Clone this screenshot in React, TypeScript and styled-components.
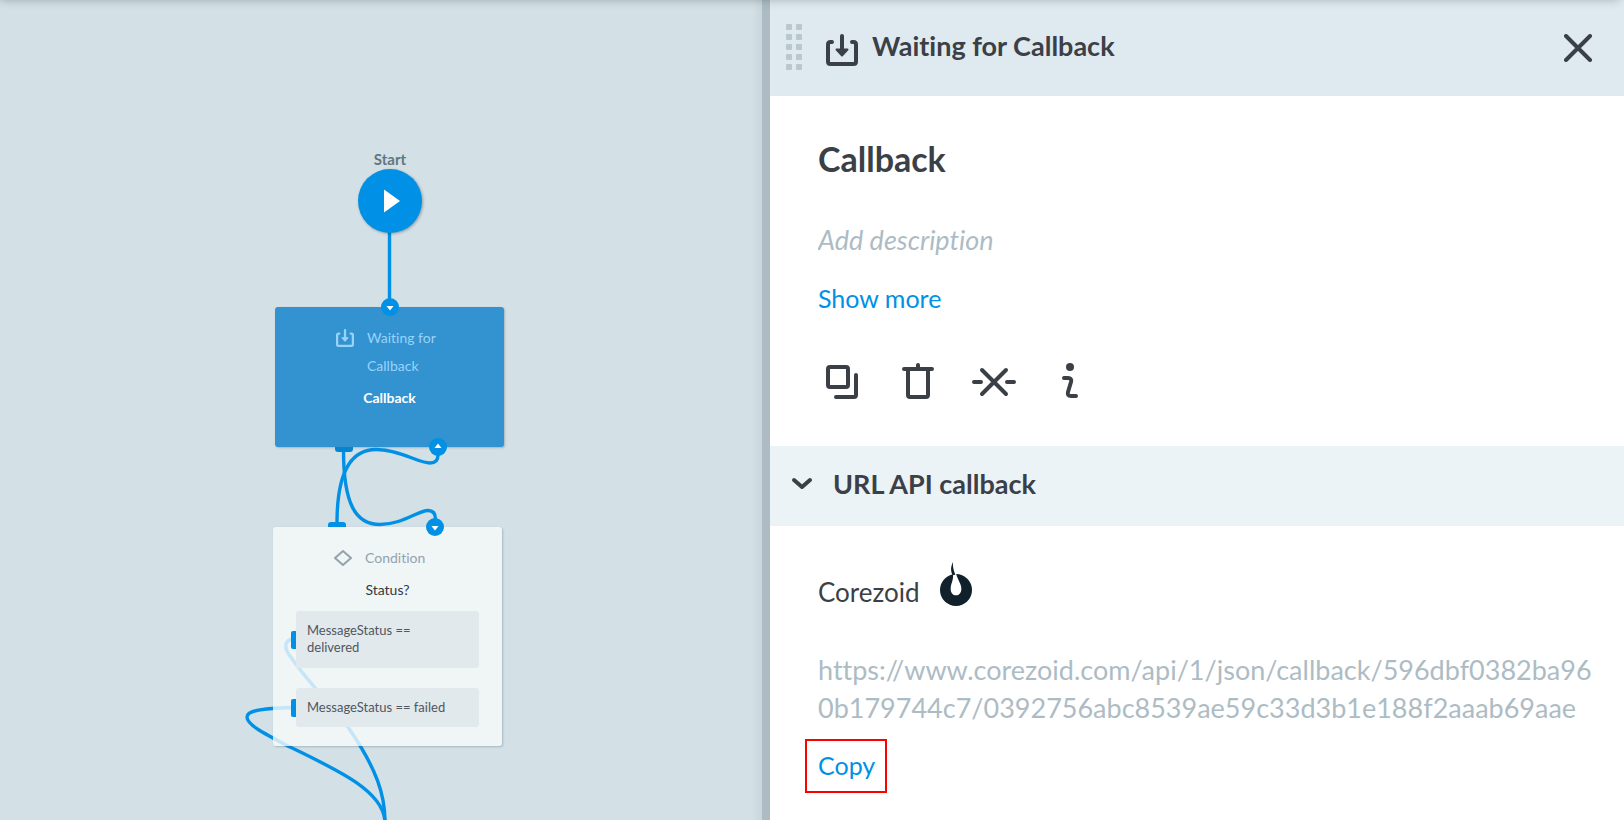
import React from 'react';
import styled, { createGlobalStyle } from 'styled-components';

const color = {
  canvas: '#d3e0e5',
  blue: '#0091e6',
  blueDark: '#0584d2',
  ink: '#3b4047',
  muted: '#adbcc4',
  header: '#dfeaf0',
  section: '#ebf3f7',
};

const GlobalStyle = createGlobalStyle`
  *, *::before, *::after { box-sizing: border-box; }
  body {
    margin: 0;
    font-family: Lato, "Liberation Sans", sans-serif;
    font-variant-ligatures: none;
    color: ${color.ink};
    background: #fff;
  }
  button, input { font: inherit; color: inherit; }
`;

const Page = styled.div`
  position: relative;
  display: grid;
  grid-template-columns: minmax(0, 762fr) 8px minmax(0, 854fr);
  min-height: 100vh;
  overflow: hidden;

  &::before {
    content: '';
    position: absolute;
    z-index: 5;
    top: -10px;
    left: 0;
    right: 4px;
    height: 10px;
    box-shadow: 0 0 10px rgba(0, 0, 0, 0.26);
  }
`;

/* ---------- Process canvas ---------- */

const Canvas = styled.main`
  position: relative;
  overflow: hidden;
  background: linear-gradient(to left, rgba(120, 145, 158, 0.12), rgba(120, 145, 158, 0) 10px) ${color.canvas};
`;

const Splitter = styled.div`
  background: ${color.muted};
  cursor: col-resize;
`;

const Edges = styled.svg`
  position: absolute;
  top: 0;
  left: 0;
  fill: none;
  stroke: ${color.blue};
  stroke-width: 3.4;
`;

const StartNode = styled.div`
  position: absolute;
  left: 350px;
  top: 149px;
  width: 80px;
  display: flex;
  flex-direction: column;
  align-items: center;
  font-size: 15px;
  font-weight: 700;
  line-height: 20px;
  color: #607782;
`;

const StartCircle = styled.button`
  width: 64px;
  height: 64px;
  padding: 0;
  border: 0;
  border-radius: 50%;
  background: ${color.blue};
  box-shadow: 1px 1px 3px rgba(0, 0, 0, 0.3);

  svg { display: block; }
`;

const Node = styled.section<{ $x: number; $y: number; $active?: boolean }>`
  position: absolute;
  left: ${(p) => p.$x}px;
  top: ${(p) => p.$y}px;
  width: 229px;
  min-height: 140px;
  padding: 17px 23px 19px;
  border-radius: 3px;
  font-size: 14px;
  line-height: 28px;
  color: ${(p) => (p.$active ? '#fff' : '#33383d')};
  background: ${(p) => (p.$active ? '#3392d0' : 'rgba(248, 250, 250, 0.8)')};
  box-shadow: 1px 1px 2px rgba(60, 90, 110, 0.3);
`;

const NodeType = styled.div<{ $tint: string }>`
  display: grid;
  grid-template-columns: 18px 96px;
  column-gap: 13px;
  padding-left: 38px;
  color: ${(p) => p.$tint};

  svg { margin-top: 5px; }
`;

const NodeTitle = styled.h3<{ $strong?: boolean }>`
  margin: 4px 0 0;
  font-size: 14px;
  font-weight: ${(p) => (p.$strong ? 700 : 400)};
  line-height: 28px;
  text-align: center;
`;

const Branch = styled.div<{ $gap: number }>`
  position: relative;
  margin-top: ${(p) => p.$gap}px;
  padding: 11px 24px 11px 11px;
  border-radius: 3px;
  background: #e2e9ed;
  font-size: 13px;
  line-height: 17px;
  color: #50575e;

  &::before {
    content: '';
    position: absolute;
    left: -5px;
    top: calc(50% - 9px);
    width: 5px;
    height: 18px;
    border-radius: 2px 0 0 2px;
    background: ${color.blue};
  }
`;

const BranchText = styled.p<{ $tall?: boolean }>`
  margin: 0;
  padding-bottom: ${(p) => (p.$tall ? 1 : 0)}px;
`;

const PortDot = styled.span<{ $x: number; $y: number; $up?: boolean }>`
  position: absolute;
  left: ${(p) => p.$x - 9}px;
  top: ${(p) => p.$y - 9}px;
  width: 18px;
  height: 18px;
  border-radius: 50%;
  background: ${color.blue};

  svg {
    display: block;
    transform: ${(p) => (p.$up ? 'rotate(180deg)' : 'none')};
  }
`;

const PortTab = styled.span<{ $x: number; $y: number; $below?: boolean }>`
  position: absolute;
  left: ${(p) => p.$x}px;
  top: ${(p) => p.$y}px;
  width: 18px;
  height: 5px;
  border-radius: ${(p) => (p.$below ? '0 0 3px 3px' : '3px 3px 0 0')};
  background: ${(p) => (p.$below ? color.blueDark : color.blue)};
`;

/* ---------- Properties panel ---------- */

const Panel = styled.aside`
  background: #fff;
`;

const PanelHeader = styled.header`
  display: flex;
  align-items: center;
  height: 96px;
  padding: 0 26px 0 16px;
  background: ${color.header};
`;

const Grip = styled.span`
  display: grid;
  grid-template-columns: 6px 6px;
  gap: 4px;
  margin-right: 24px;
  padding-bottom: 2px;
  cursor: move;
`;

const GripDot = styled.i`
  height: 6px;
  border-radius: 1px;
  background: #bac7cd;
`;

const PanelTitle = styled.h1`
  flex: 1;
  margin: 0 0 0 14px;
  padding-bottom: 4px;
  font-size: 27px;
  line-height: 32px;
`;

const IconButton = styled.button<{ $size: number }>`
  display: grid;
  place-items: center;
  width: ${(p) => p.$size}px;
  height: ${(p) => p.$size}px;
  padding: 0;
  border: 0;
  background: none;
`;

const Details = styled.div`
  padding: 43px 24px 40px 48px;
`;

const NodeName = styled.h2`
  margin: 0 0 45px;
  font-size: 34px;
  line-height: 40px;
`;

const Description = styled.input`
  display: block;
  width: 100%;
  height: 32px;
  margin-bottom: 26px;
  padding: 0;
  border: 0;
  outline: 0;
  background: none;
  font-size: 27px;
  line-height: 32px;

  &::placeholder {
    color: ${color.muted};
    font-style: italic;
    opacity: 1;
  }
`;

const TextButton = styled.button`
  display: block;
  padding: 0;
  border: 0;
  background: none;
  font-size: 25px;
  line-height: 32px;
  color: ${color.blue};
`;

const Tools = styled.div`
  display: flex;
  gap: 28px;
  margin-top: 44px;
`;

const SectionToggle = styled.button`
  display: flex;
  align-items: center;
  gap: 20px;
  width: 100%;
  height: 80px;
  padding: 0 24px 4px 21px;
  border: 0;
  background: ${color.section};
  font-size: 27px;
  font-weight: 700;
  line-height: 32px;
`;

const SectionBody = styled.div`
  padding: 36px 24px 24px 48px;
`;

const Service = styled.div`
  display: flex;
  align-items: flex-end;
  gap: 20px;
  height: 46px;
  margin-bottom: 43px;
  font-size: 26px;
  line-height: 32px;

  svg { align-self: flex-start; }
`;

const CallbackUrl = styled.p`
  margin: 0;
  font-size: 27px;
  line-height: 38px;
  color: ${color.muted};
  word-break: break-all;
`;

const CopyButton = styled(TextButton)`
  margin: 12px 0 0 -13px;
  padding: 8px 10px 10px 11px;
  border: 2px solid #f00;
`;

/* ---------- Icons ---------- */

const InboxIcon = ({ size }: { size: number }) => (
  <svg width={size} height={size} viewBox="0 0 32 32" fill="none" stroke="currentColor" strokeWidth="4" strokeLinecap="round" strokeLinejoin="round">
    <path d="M6 8H4.500Q2 8 2 10.500V27.500Q2 30 4.500 30H27.500Q30 30 30 27.500V10.500Q30 8 27.500 8H26M16 2V16" />
    <path d="M10.500 15.500H21.500L16 21.500Z" fill="currentColor" strokeWidth="2" />
  </svg>
);

const HeaderInbox = styled.span`
  display: flex;
  padding-top: 4px;
`;

const CloseIcon = () => (
  <svg width="28" height="28" viewBox="0 0 28 28" stroke="currentColor" strokeWidth="4" strokeLinecap="round">
    <path d="M2 2L26 26M26 2L2 26" />
  </svg>
);

const ToolSvg = styled.svg`
  fill: none;
  stroke: currentColor;
  stroke-width: 4;
  stroke-linecap: round;
  stroke-linejoin: round;
`;

const CopyIcon = () => (
  <ToolSvg width="48" height="48" viewBox="0 0 48 48">
    <rect x="10" y="9" width="20" height="20" rx="2" />
    <path d="M38 17V37Q38 39 36 39H18" />
  </ToolSvg>
);

const TrashIcon = () => (
  <ToolSvg width="48" height="48" viewBox="0 0 48 48">
    <path d="M10 11H38M24 7V11M14 11V37Q14 39 16 39H32Q34 39 34 37V11" />
  </ToolSvg>
);

const DisableIcon = () => (
  <ToolSvg width="48" height="48" viewBox="0 0 48 48">
    <path d="M12 12L36 36M36 12L12 36M4 24H11M37 24H44" />
  </ToolSvg>
);

const InfoIcon = () => (
  <ToolSvg width="48" height="48" viewBox="0 0 48 48">
    <circle cx="24" cy="9" r="4" fill="currentColor" stroke="none" />
    <path d="M18 20H22Q26 20 25 24L22 34Q21 38 25 38H30" />
  </ToolSvg>
);

const ChevronIcon = () => (
  <svg width="22" height="22" viewBox="0 0 22 22" fill="none" stroke="currentColor" strokeWidth="4" strokeLinecap="round" strokeLinejoin="round">
    <path d="M3 7L11 14L19 7" />
  </svg>
);

const DiamondIcon = () => (
  <svg width="18" height="18" viewBox="0 0 18 18" fill="none" stroke="currentColor" strokeWidth="2" strokeLinejoin="round">
    <path d="M1 9L9 2L17 9L9 16Z" />
  </svg>
);

const PortArrow = () => (
  <svg width="18" height="18" viewBox="0 0 18 18">
    <path d="M5.500 8H12.500L9 12.500Z" fill="#fff" />
  </svg>
);

const CorezoidLogo = () => (
  <svg width="32" height="44" viewBox="0 0 96 132">
    <circle cx="48" cy="84" r="48" fill="#10212b" />
    <path d="M38 34C43 52 32 64 32 80C32 92 38 100 48 100C58 100 64 92 64 80C64 66 52 52 48 34Z" fill="#fff" />
    <path d="M39 0C32 14 31 26 38 40L46 38C40 24 38 14 39 0Z" fill="#10212b" />
  </svg>
);

const dots = Array.from({ length: 10 }, (_, i) => i);

export default function App() {
  return (
    <Page>
      <GlobalStyle />
      <Canvas>
        <Edges width="762" height="822" viewBox="0 0 762 822">
          <path d="M389.500 230V300" />
          <path d="M343.500 450C343.500 505 356 524.500 380 524.500C402 524.500 418 510.500 428 510.500C433 510.500 435.500 513 435.500 519" />
          <path d="M337 523C337 475 350 449.500 376 449.500C400 449.500 418 463 430 463C436 463 438 460 438 455" />
          <path d="M293 639C284 640 284 648 290 656C312 688 334 706 350 730C377 770 385 795 385 822" />
          <path d="M296 707.500C265 708 247 710 247 717C247 725 265 734 290 747C340 771 384 792 385 822" />
        </Edges>

        <StartNode>
          Start
          <StartCircle aria-label="Start">
            <svg width="64" height="64" viewBox="0 0 64 64">
              <path d="M26 20.500L42 32L26 43.500Z" fill="#fff" />
            </svg>
          </StartCircle>
        </StartNode>

        <Node $x={275} $y={307} $active>
          <NodeType $tint="#99d3fa">
            <InboxIcon size={18} />
            <span>Waiting for Callback</span>
          </NodeType>
          <NodeTitle $strong>Callback</NodeTitle>
        </Node>

        <Node $x={273} $y={527}>
          <NodeType $tint="#93a3ae">
            <DiamondIcon />
            <span>Condition</span>
          </NodeType>
          <NodeTitle>Status?</NodeTitle>
          <Branch $gap={7}>
            <BranchText $tall>MessageStatus == delivered</BranchText>
          </Branch>
          <Branch $gap={20}>
            <BranchText>MessageStatus == failed</BranchText>
          </Branch>
        </Node>

        <PortTab $x={335} $y={447} $below />
        <PortTab $x={328} $y={522} />
        <PortDot $x={390} $y={307}><PortArrow /></PortDot>
        <PortDot $x={438} $y={447} $up><PortArrow /></PortDot>
        <PortDot $x={435} $y={527}><PortArrow /></PortDot>
      </Canvas>

      <Splitter />

      <Panel>
        <PanelHeader>
          <Grip>{dots.map((d) => <GripDot key={d} />)}</Grip>
          <HeaderInbox><InboxIcon size={32} /></HeaderInbox>
          <PanelTitle>Waiting for Callback</PanelTitle>
          <IconButton $size={40} aria-label="Close"><CloseIcon /></IconButton>
        </PanelHeader>

        <Details>
          <NodeName>Callback</NodeName>
          <Description aria-label="Description" placeholder="Add description" />
          <TextButton>Show more</TextButton>
          <Tools>
            <IconButton $size={48} aria-label="Copy node"><CopyIcon /></IconButton>
            <IconButton $size={48} aria-label="Delete node"><TrashIcon /></IconButton>
            <IconButton $size={48} aria-label="Disconnect node"><DisableIcon /></IconButton>
            <IconButton $size={48} aria-label="Node info"><InfoIcon /></IconButton>
          </Tools>
        </Details>

        <SectionToggle aria-expanded="true">
          <ChevronIcon />
          URL API callback
        </SectionToggle>
        <SectionBody>
          <Service>
            Corezoid
            <CorezoidLogo />
          </Service>
          <CallbackUrl>
            https://www.corezoid.com/api/1/json/callback/596dbf0382ba960b179744c7/0392756abc8539ae59c33d3b1e188f2aaab69aae
          </CallbackUrl>
          <CopyButton>Copy</CopyButton>
        </SectionBody>
      </Panel>
    </Page>
  );
}
